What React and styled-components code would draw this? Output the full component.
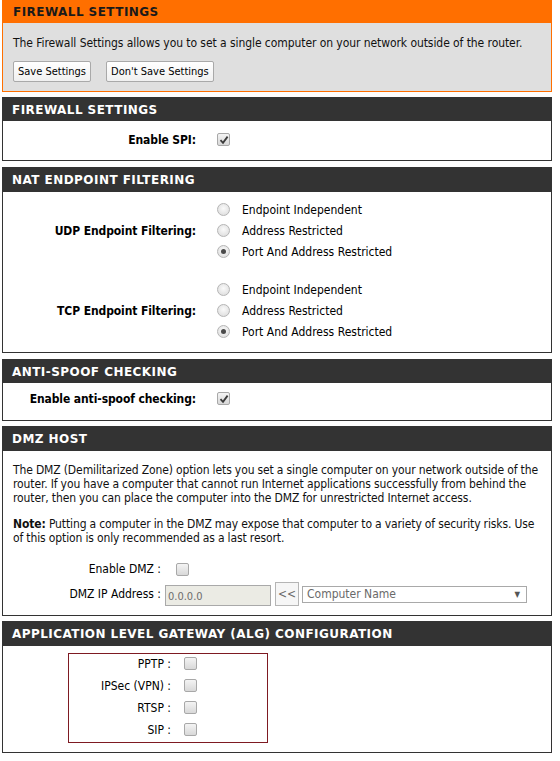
import React from "react";
import styled, { createGlobalStyle } from "styled-components";

const GlobalStyle = createGlobalStyle`
  body {
    margin: 0;
    background: #ffffff;
    font-family: "DejaVu Sans Condensed", "Liberation Sans", sans-serif;
    font-size: 12px;
    color: #000000;
  }
`;

const Page = styled.div`
  width: 550px;
  margin-left: 2px;
  padding-bottom: 8px;
`;

const TopBox = styled.div`
  border: 1px solid #ff6f00;
  border-top: 0;
  background: #dfdfdf;
`;

const TopHeader = styled.div`
  background: #ff6f00;
  margin: 0 -1px;
  height: 23px;
  line-height: 25px;
  padding-left: 11px;
  font-family: "DejaVu Sans", Verdana, sans-serif;
  font-weight: bold;
  font-size: 12px;
  letter-spacing: 0.45px;
  color: #1a1a1a;
`;

const TopBody = styled.div`
  padding: 13px 10px 9px 10px;
`;

const Intro = styled.p`
  margin: 0 0 10px 0;
  line-height: 15px;
  letter-spacing: -0.07px;
  color: #111;
`;

const ButtonRow = styled.div`
  display: flex;
  gap: 15px;
`;

const Button = styled.button`
  font-family: inherit;
  font-size: 11px;
  height: 21px;
  padding: 0 4px;
  background: linear-gradient(#ffffff, #f0f0f0);
  border: 1px solid #a9a9a9;
  border-radius: 2px;
  color: #000;
`;

const Section = styled.div`
  margin-top: ${(p) => p.$space || 5}px;
  border: 1px solid #333333;
  background: #ffffff;
`;

const SectionHeader = styled.div`
  background: #333333;
  height: ${(p) => p.$h || 23}px;
  line-height: ${(p) => (p.$h || 23) + 1}px;
  padding-left: 9px;
  font-family: "DejaVu Sans", Verdana, sans-serif;
  font-weight: bold;
  font-size: 12px;
  letter-spacing: 0.45px;
  color: #ffffff;
`;

const SectionBody = styled.div`
  padding: ${(p) => p.$pad || "0"};
`;

const Row = styled.div`
  display: grid;
  grid-template-columns: ${(p) => p.$label || 193}px 1fr;
  column-gap: ${(p) => p.$gap || 21}px;
  align-items: center;
  min-height: ${(p) => p.$h || 21}px;
  margin-top: ${(p) => p.$top || 0}px;
`;

const AlgRow = styled(Row)`
  min-height: 19px;
  padding-bottom: 3px;
`;

const Label = styled.div`
  text-align: right;
  font-weight: ${(p) => (p.$plain ? "normal" : "bold")};
  letter-spacing: ${(p) => (p.$plain ? "0" : "-0.1px")};
`;

const OptionList = styled.div`
  display: flex;
  flex-direction: column;
`;

const Option = styled.div`
  display: flex;
  align-items: center;
  gap: 12px;
  height: 21px;
`;

const Box = styled.span`
  display: inline-block;
  box-sizing: border-box;
  width: 13px;
  height: 13px;
  border: 1px solid #a8a8a8;
  border-radius: 2px;
  background: linear-gradient(#f4f4f4, #d8d8d8);
  position: relative;
  svg {
    position: absolute;
    left: 1px;
    top: 1px;
  }
`;

const Radio = styled.span`
  display: inline-block;
  box-sizing: border-box;
  width: 13px;
  height: 13px;
  border: 1px solid #b5b5b5;
  border-radius: 50%;
  background: radial-gradient(circle at 50% 40%, #fafafa, #d9d9d9);
  position: relative;
  &::after {
    content: "";
    display: ${(p) => (p.$on ? "block" : "none")};
    position: absolute;
    left: 3px;
    top: 3px;
    width: 5px;
    height: 5px;
    border-radius: 50%;
    background: #4a4a4a;
  }
`;

const Check = ({ on }) => (
  <Box>
    {on && (
      <svg width="10" height="10" viewBox="0 0 10 10">
        <path d="M1.5 5.2 L4 7.8 L8.6 1.6" fill="none" stroke="#3a3a3a" strokeWidth="1.8" />
      </svg>
    )}
  </Box>
);

const Paragraph = styled.p`
  margin: 0 0 12px 0;
  line-height: 14px;
  letter-spacing: -0.1px;
  word-spacing: -0.2px;
  white-space: nowrap;
  color: #111;
`;

const Field = styled.div`
  display: flex;
  align-items: center;
  gap: 3px;
`;

const TextInput = styled.div`
  box-sizing: border-box;
  width: 106px;
  height: 21px;
  margin-top: 2px;
  border: 1px solid #a9a9a9;
  background: #ebebe4;
  color: #6d6d6d;
  font-size: 11px;
  line-height: 22px;
  padding-left: 2px;
`;

const SmallButton = styled.button`
  font-family: inherit;
  font-size: 12px;
  height: 24px;
  width: 24px;
  padding: 0;
  margin-left: 1px;
  background: #f6f6f6;
  border: 1px solid #b5b5b5;
  color: #6a6a6a;
`;

const Select = styled.div`
  box-sizing: border-box;
  width: 225px;
  height: 17px;
  border: 1px solid #a9a9a9;
  background: #fff;
  color: #6a6a6a;
  display: flex;
  align-items: center;
  justify-content: space-between;
  padding: 0 6px 0 4px;
  span:last-child {
    font-size: 8px;
    color: #555;
  }
`;

const AlgFrame = styled.div`
  margin: 7px 0 9px 65px;
  width: 198px;
  border: 1px solid #7e1a22;
`;

const algItems = ["PPTP :", "IPSec (VPN) :", "RTSP :", "SIP :"];

const Filtering = ({ name, top }) => (
  <Row $top={top}>
    <Label>{name} Endpoint Filtering:</Label>
    <OptionList>
      <Option><Radio />Endpoint Independent</Option>
      <Option><Radio />Address Restricted</Option>
      <Option><Radio $on />Port And Address Restricted</Option>
    </OptionList>
  </Row>
);

export default function App() {
  return (
    <>
      <GlobalStyle />
      <Page>
        <TopBox>
          <TopHeader>FIREWALL SETTINGS</TopHeader>
          <TopBody>
            <Intro>
              The Firewall Settings allows you to set a single computer on your network outside of the router.
            </Intro>
            <ButtonRow>
              <Button>Save Settings</Button>
              <Button>Don't Save Settings</Button>
            </ButtonRow>
          </TopBody>
        </TopBox>

        <Section>
          <SectionHeader>FIREWALL SETTINGS</SectionHeader>
          <SectionBody $pad="8px 0 10px">
            <Row>
              <Label>Enable SPI:</Label>
              <Check on />
            </Row>
          </SectionBody>
        </Section>

        <Section $space={6}>
          <SectionHeader $h={24}>NAT ENDPOINT FILTERING</SectionHeader>
          <SectionBody $pad="7px 0 10px">
            <Filtering name="UDP" />
            <Filtering name="TCP" top={17} />
          </SectionBody>
        </Section>

        <Section $space={6}>
          <SectionHeader>ANTI-SPOOF CHECKING</SectionHeader>
          <SectionBody $pad="5px 0 11px">
            <Row>
              <Label>Enable anti-spoof checking:</Label>
              <Check on />
            </Row>
          </SectionBody>
        </Section>

        <Section>
          <SectionHeader $h={24}>DMZ HOST</SectionHeader>
          <SectionBody $pad="12px 10px 8px 10px">
            <Paragraph>
              The DMZ (Demilitarized Zone) option lets you set a single computer on your network outside of the
              <br />
              router. If you have a computer that cannot run Internet applications successfully from behind the
              <br />
              router, then you can place the computer into the DMZ for unrestricted Internet access.
            </Paragraph>
            <Paragraph>
              <b>Note:</b> Putting a computer in the DMZ may expose that computer to a variety of security risks. Use
              <br />
              of this option is only recommended as a last resort.
            </Paragraph>
            <Row $label={148} $gap={15} $h={24} $top={9}>
              <Label $plain>Enable DMZ :</Label>
              <Check />
            </Row>
            <Row $label={148} $gap={4} $h={26}>
              <Label $plain>DMZ IP Address :</Label>
              <Field>
                <TextInput>0.0.0.0</TextInput>
                <SmallButton>&lt;&lt;</SmallButton>
                <Select>
                  <span>Computer Name</span>
                  <span>▼</span>
                </Select>
              </Field>
            </Row>
          </SectionBody>
        </Section>

        <Section>
          <SectionHeader $h={24}>APPLICATION LEVEL GATEWAY (ALG) CONFIGURATION</SectionHeader>
          <SectionBody>
            <AlgFrame>
              {algItems.map((name) => (
                <AlgRow key={name} $label={102} $gap={13}>
                  <Label $plain>{name}</Label>
                  <Check />
                </AlgRow>
              ))}
            </AlgFrame>
          </SectionBody>
        </Section>
      </Page>
    </>
  );
}
